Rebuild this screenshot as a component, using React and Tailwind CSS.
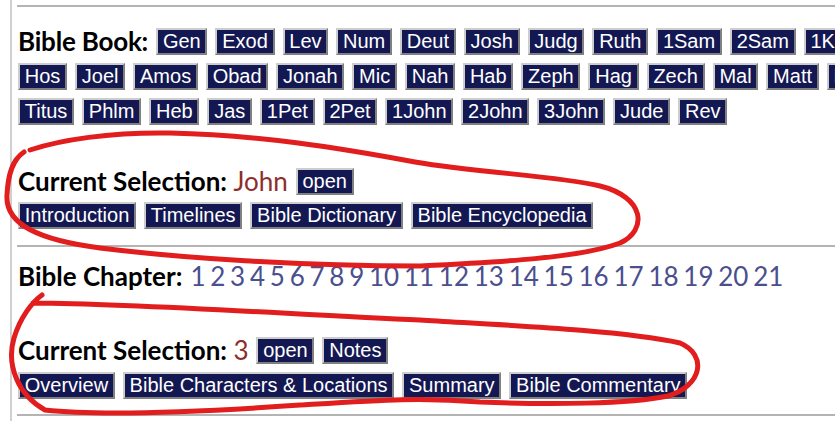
import React from 'react';

const ROWS = [
  ['Gen', 'Exod', 'Lev', 'Num', 'Deut', 'Josh', 'Judg', 'Ruth', '1Sam', '2Sam', '1Kgs', '2Kgs', '1Chr', '2Chr', 'Ezra', 'Neh', 'Esth', 'Job', 'Ps', 'Prov', 'Eccl', 'Song', 'Isa', 'Jer', 'Lam', 'Ezek', 'Dan'],
  ['Hos', 'Joel', 'Amos', 'Obad', 'Jonah', 'Mic', 'Nah', 'Hab', 'Zeph', 'Hag', 'Zech', 'Mal', 'Matt', 'Mark', 'Luke', 'John', 'Acts', 'Rom', '1Cor', '2Cor', 'Gal', 'Eph', 'Phil', 'Col', '1Thes', '2Thes', '1Tim', '2Tim'],
  ['Titus', 'Phlm', 'Heb', 'Jas', '1Pet', '2Pet', '1John', '2John', '3John', 'Jude', 'Rev'],
];

const CHAPTERS = Array.from({ length: 21 }, (_, i) => i + 1);

const label = "font-['Lato',sans-serif] font-bold text-[26px] leading-[27px] text-black";

const Btn = ({ children }) => (
  <button className="shrink-0 h-[27px] px-[4.75px] bg-[#141852] text-white font-['Liberation_Sans',Arial,sans-serif] text-[20px] leading-[23px] border-2 border-t-[#cdcdcd] border-l-[#cdcdcd] border-b-[#808080] border-r-[#808080] whitespace-nowrap">
    {children}
  </button>
);

const Hr = () => <div className="h-[2px] bg-[#b4b4b4]" />;

export default function App() {
  return (
    <div className="relative w-[835px] h-[421px] overflow-hidden bg-white">
      <div className="ml-[10px] h-full border-l-2 border-[#d0d0d0] pl-[5px]">
        <div className="pt-[5px]">
          <Hr />

          <div className="mt-[21px] flex items-center gap-[8px] whitespace-nowrap pl-[1px]">
            <span className={`${label} tracking-[-0.2px]`}>Bible Book:</span>
            {ROWS[0].map((b) => <Btn key={b}>{b}</Btn>)}
          </div>
          <div className="mt-[8px] flex items-center gap-[8px] pl-[1px]">
            {ROWS[1].map((b) => <Btn key={b}>{b}</Btn>)}
          </div>
          <div className="mt-[8px] flex items-center gap-[8px] pl-[1px]">
            {ROWS[2].map((b) => <Btn key={b}>{b}</Btn>)}
          </div>

          <div className="mt-[43px] flex items-center gap-[8px] whitespace-nowrap pl-[1px]">
            <span className={label}>
              Current Selection: <span className="font-normal text-[#8e2e2a]">John</span>
            </span>
            <Btn>open</Btn>
          </div>
          <div className="mt-[7px] flex items-center gap-[8px] pl-[1px]">
            <Btn>Introduction</Btn>
            <Btn>Timelines</Btn>
            <Btn>Bible Dictionary</Btn>
            <Btn>Bible Encyclopedia</Btn>
          </div>

          <div className="mt-[16px]">
            <Hr />
          </div>

          <div className="mt-[16px] h-[27px] flex items-center whitespace-nowrap pl-[1px]">
            <span className={label}>Bible Chapter:</span>
            <span className="ml-[8px] flex gap-[4.75px] font-['Lato',sans-serif] text-[26px] leading-[27px] text-[#4a4f8e]">
              {CHAPTERS.map((c) => <span key={c}>{c}</span>)}
            </span>
          </div>

          <div className="mt-[47px] flex items-center gap-[8px] whitespace-nowrap pl-[1px]">
            <span className={label}>
              Current Selection: <span className="font-normal text-[#8e2e2a]">3</span>
            </span>
            <Btn>open</Btn>
            <Btn>Notes</Btn>
          </div>
          <div className="mt-[8px] flex items-center gap-[8px] pl-[1px]">
            <Btn>Overview</Btn>
            <Btn>Bible Characters &amp; Locations</Btn>
            <Btn>Summary</Btn>
            <Btn>Bible Commentary</Btn>
          </div>

          <div className="mt-[15px]">
            <Hr />
          </div>
        </div>
      </div>

      <svg className="absolute inset-0 pointer-events-none" width="835" height="421" viewBox="0 0 835 421" fill="none">
        <path
          d="M 30 150 C 60 140, 110 132, 170 133 C 260 135, 340 148, 415 162 C 480 173, 560 176, 600 186 C 645 197, 648 230, 620 243 C 580 258, 500 262, 420 266 C 300 266, 180 258, 100 248 C 40 240, 5 225, 7 195 C 8 175, 12 160, 24 152"
          stroke="#e11d1d"
          strokeWidth="5"
          strokeLinecap="round"
          strokeLinejoin="round"
        />
        <path
          d="M 42 295 C 32 302, 20 318, 14 338 C 6 365, 18 395, 45 410 C 100 416, 200 412, 300 405 C 380 400, 420 397, 480 402 C 550 405, 630 404, 668 396 C 702 386, 708 355, 680 343 C 620 330, 500 325, 420 320 C 300 315, 150 304, 33 303"
          stroke="#e11d1d"
          strokeWidth="5"
          strokeLinecap="round"
          strokeLinejoin="round"
        />
      </svg>
    </div>
  );
}
